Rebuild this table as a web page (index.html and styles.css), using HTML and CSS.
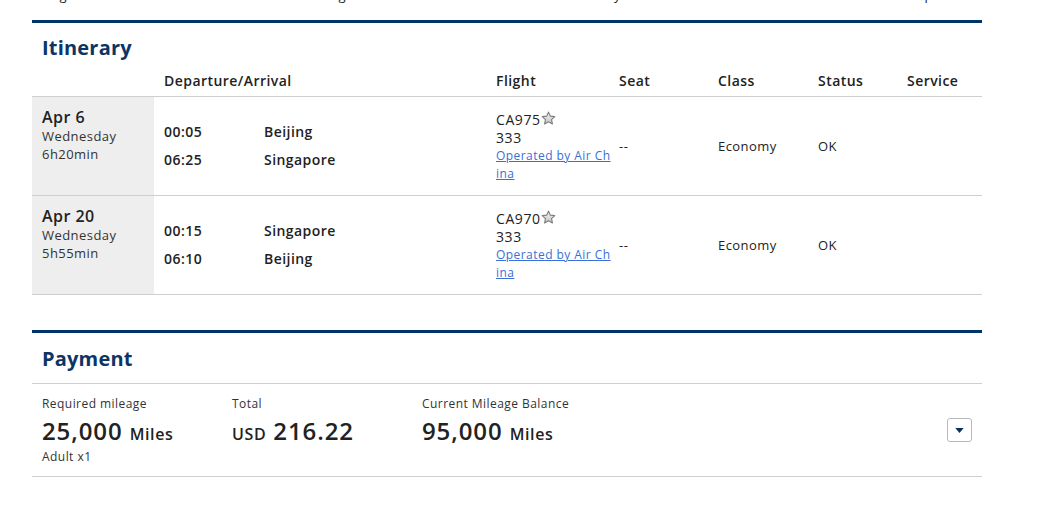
FILE: index.html
```html
<!DOCTYPE html>
<html>
<head>
<meta charset="utf-8">
<link rel="stylesheet" href="styles.css">
</head>
<body>
<div class="page">
  <div class="steps">
    <span class="step s1">Flight Search</span>
    <span class="step s2">Passenger Information</span>
    <span class="step s3">Payment Method</span>
    <span class="step s4">Complete</span>
  </div>

  <section class="section itinerary">
    <h2 class="section-title">Itinerary</h2>
    <div class="it-head">
      <div class="c-date"></div>
      <div class="c-dep">Departure/Arrival</div>
      <div class="c-flight">Flight</div>
      <div class="c-seat">Seat</div>
      <div class="c-class">Class</div>
      <div class="c-status">Status</div>
      <div class="c-service">Service</div>
    </div>

    <div class="it-row">
      <div class="c-date date-cell">
        <div class="date-main">Apr 6</div>
        <div class="date-sub">Wednesday</div>
        <div class="date-sub">6h20min</div>
      </div>
      <div class="c-dep dep-cell">
        <div class="dep-line"><span class="time">00:05</span><span class="city">Beijing</span></div>
        <div class="dep-line"><span class="time">06:25</span><span class="city">Singapore</span></div>
      </div>
      <div class="c-flight flight-cell">
        <div class="fno">CA975<svg class="star" viewBox="0 0 16 16" width="15" height="15"><defs><linearGradient id="sg1" x1="0" y1="0" x2="0" y2="1"><stop offset="0" stop-color="#f4f4f4"/><stop offset="1" stop-color="#c4c4c4"/></linearGradient></defs><path d="M8 1.2l2 4.3 4.7.5-3.5 3.2 1 4.6L8 11.5l-4.2 2.3 1-4.6L1.3 6l4.7-.5z" fill="url(#sg1)" stroke="#7d7d7d" stroke-width="1.2" stroke-linejoin="round"/></svg></div>
        <div class="ac">333</div>
        <a class="op" href="#">Operated by Air China</a>
      </div>
      <div class="c-seat mid">--</div>
      <div class="c-class mid">Economy</div>
      <div class="c-status mid">OK</div>
      <div class="c-service mid"></div>
    </div>

    <div class="it-row">
      <div class="c-date date-cell">
        <div class="date-main">Apr 20</div>
        <div class="date-sub">Wednesday</div>
        <div class="date-sub">5h55min</div>
      </div>
      <div class="c-dep dep-cell">
        <div class="dep-line"><span class="time">00:15</span><span class="city">Singapore</span></div>
        <div class="dep-line"><span class="time">06:10</span><span class="city">Beijing</span></div>
      </div>
      <div class="c-flight flight-cell">
        <div class="fno">CA970<svg class="star" viewBox="0 0 16 16" width="15" height="15"><defs><linearGradient id="sg2" x1="0" y1="0" x2="0" y2="1"><stop offset="0" stop-color="#f4f4f4"/><stop offset="1" stop-color="#c4c4c4"/></linearGradient></defs><path d="M8 1.2l2 4.3 4.7.5-3.5 3.2 1 4.6L8 11.5l-4.2 2.3 1-4.6L1.3 6l4.7-.5z" fill="url(#sg2)" stroke="#7d7d7d" stroke-width="1.2" stroke-linejoin="round"/></svg></div>
        <div class="ac">333</div>
        <a class="op" href="#">Operated by Air China</a>
      </div>
      <div class="c-seat mid">--</div>
      <div class="c-class mid">Economy</div>
      <div class="c-status mid">OK</div>
      <div class="c-service mid"></div>
    </div>
  </section>

  <section class="section payment">
    <h2 class="section-title">Payment</h2>
    <div class="pay-row">
      <div class="pay-col">
        <div class="pay-label">Required mileage</div>
        <div class="pay-value">25,000 <span class="unit">Miles</span></div>
        <div class="pay-note">Adult x1</div>
      </div>
      <div class="pay-col">
        <div class="pay-label">Total</div>
        <div class="pay-value"><span class="unit">USD</span> 216.22</div>
      </div>
      <div class="pay-col">
        <div class="pay-label">Current Mileage Balance</div>
        <div class="pay-value">95,000 <span class="unit">Miles</span></div>
      </div>
      <button class="toggle" type="button"><svg viewBox="0 0 10 6" width="9" height="5"><path d="M0 0h10L5 6z" fill="#0a2f5f"/></svg></button>
    </div>
  </section>
</div>
</body>
</html>
```

FILE: styles.css
```css
* { box-sizing: border-box; }
html, body { margin: 0; padding: 0; background: #fff; }
body {
  font-family: "Open Sans", "DejaVu Sans", sans-serif;
  color: #222;
  letter-spacing: 0.45px;
}
.page {
  width: 950px;
  margin-left: 32px;
}
.steps {
  display: grid;
  grid-template-columns: 248px 305px 297px 1fr;
  height: 20px;
  margin-top: -14px;
  padding-left: 13px;
  font-size: 13px;
  line-height: 18px;
  color: #222;
}
.step { white-space: nowrap; }

.section {
  border-top: 3px solid #003366;
}
.steps + .section { margin-top: 14px; }
.section-title {
  margin: 0;
  padding: 0 10px;
  font-size: 20px;
  font-weight: 700;
  color: #0c3565;
  line-height: 24px;
  letter-spacing: 0.2px;
}
.itinerary .section-title { height: 49px; padding-top: 13px; }

.it-head, .it-row {
  display: grid;
  grid-template-columns: 122px 342px 123px 99px 100px 89px 75px;
}
.it-head {
  font-size: 14px;
  font-weight: 600;
  color: #222;
  line-height: 18px;
  padding-bottom: 6px;
  border-bottom: 1px solid #cfcfcf;
}
.it-head .c-dep { padding-left: 10px; }
.it-row {
  border-bottom: 1px solid #cfcfcf;
  min-height: 99px;
}
.date-cell {
  background: #eeeeee;
  padding: 10px 10px 0;
}
.date-main {
  font-size: 16px;
  font-weight: 600;
  line-height: 20px;
  color: #222;
}
.date-sub {
  font-size: 13px;
  line-height: 18px;
  color: #333;
}
.dep-cell {
  padding-left: 10px;
  display: flex;
  flex-direction: column;
  justify-content: center;
  gap: 10px;
}
.dep-line {
  display: flex;
  font-size: 14px;
  font-weight: 600;
  line-height: 18px;
}
.time { width: 100px; }
.flight-cell {
  display: flex;
  flex-direction: column;
  justify-content: center;
  padding-right: 8px;
  padding-top: 2px;
}
.fno, .ac {
  font-size: 14px;
  line-height: 18px;
  color: #222;
  letter-spacing: 0.6px;
}
.star { vertical-align: -1px; margin-left: 0; }
.op {
  font-size: 12px;
  line-height: 18px;
  color: #3a6fd8;
  text-decoration: underline;
  word-break: break-all;
}
.mid {
  display: flex;
  align-items: center;
  font-size: 13px;
  color: #222;
}

.payment { margin-top: 35px; }
.payment .section-title {
  height: 51px;
  border-bottom: 1px solid #cfcfcf;
  padding-top: 14px;
}
.pay-row {
  display: flex;
  align-items: flex-start;
  padding: 11px 10px 0;
  height: 93px;
  border-bottom: 1px solid #cfcfcf;
}
.pay-col { width: 190px; }
.pay-label {
  font-size: 12px;
  line-height: 18px;
  color: #333;
}
.pay-value {
  font-size: 24px;
  font-weight: 600;
  line-height: 32px;
  margin-top: 2px;
  color: #222;
  letter-spacing: 0.9px;
}
.unit { font-size: 16px; letter-spacing: 0.6px; }
.pay-note {
  font-size: 12px;
  line-height: 14px;
  color: #333;
}
.toggle {
  margin-left: auto;
  margin-top: 23px;
  width: 25px;
  height: 24px;
  border: 1px solid #b8b8b8;
  border-radius: 3px;
  background: #fff;
  padding: 0;
  display: flex;
  align-items: center;
  justify-content: center;
}
```
